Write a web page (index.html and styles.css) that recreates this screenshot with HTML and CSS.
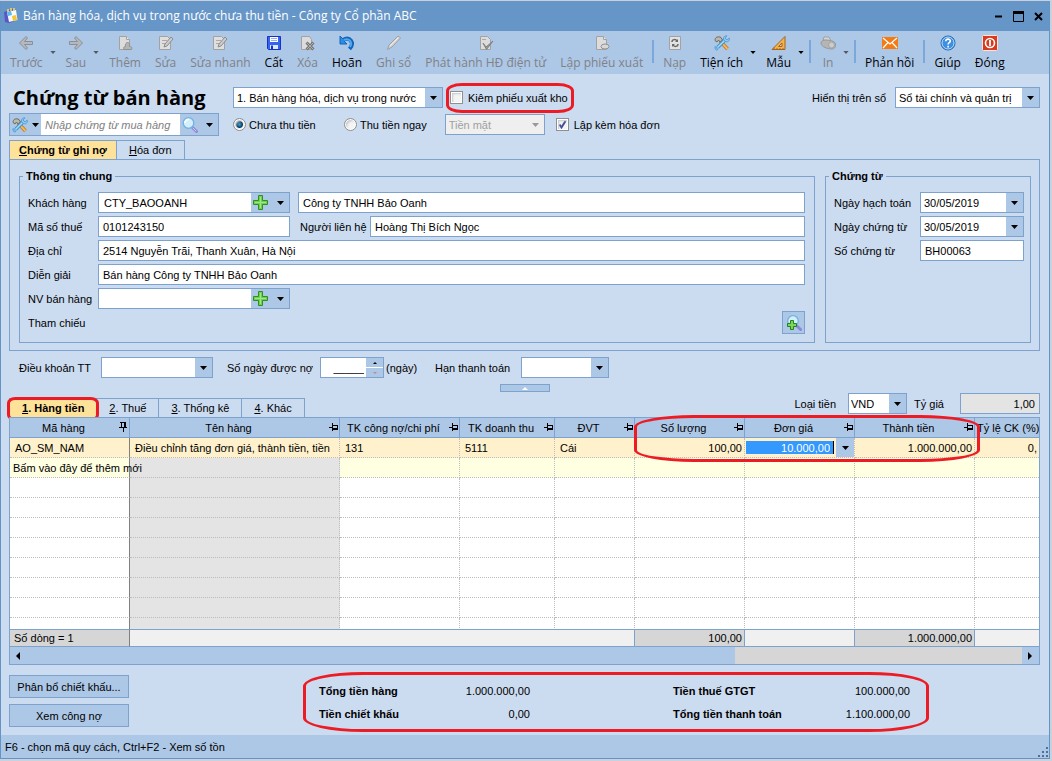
FILE: index.html
```html
<!DOCTYPE html>
<html lang="vi">
<head>
    <meta charset="utf-8">
    <title>Bán hàng hóa, dịch vụ trong nước chưa thu tiền - Công ty Cổ phần ABC</title>
    <link rel="stylesheet" href="styles.css">
</head>
<body>
    <svg class="defs" aria-hidden="true">
        <symbol id="i-back" viewBox="0 0 16 16"><path d="M1.500 8L8 1.500l1.500 1.500L6.500 6.500H14.500v3H6.500L9.500 13 8 14.500z" fill="#b5b8bc" stroke="#8b8f94"/></symbol>
        <symbol id="i-next" viewBox="0 0 16 16"><path d="M14.500 8L8 1.500 6.500 3l3 3.500H1.500v3H9.500L6.500 13 8 14.500z" fill="#b5b8bc" stroke="#8b8f94"/></symbol>
        <symbol id="i-new" viewBox="0 0 16 16"><path d="M2.500 1.500h7l3 3v10h-10z" fill="#dcdcdc" stroke="#a2a2a2"/><path d="M9.500 1.500v3h3" fill="#eee" stroke="#a2a2a2"/><path d="M7 14.500c-1-2 0-3 1.500-3-.5-3 1-4 2-4s2.500 1 2 4c2 0 3 1 2 3z" fill="#b4b4b4" stroke="#929292"/></symbol>
        <symbol id="i-export" viewBox="0 0 16 16"><path d="M2.500 1.500h7l3 3v10h-10z" fill="#dcdcdc" stroke="#a2a2a2"/><path d="M9.500 1.500v3h3" fill="#eee" stroke="#a2a2a2"/><ellipse cx="11" cy="11.500" rx="4" ry="2.500" fill="#d8d8d8" stroke="#929292"/></symbol>
        <symbol id="i-edit" viewBox="0 0 16 16"><path d="M1.500 1.500h8l3 3v10h-11z" fill="#dfdfdf" stroke="#a2a2a2"/><path d="M4 5.500h5M4 8.500h3" stroke="#aaa"/><path d="M6 12l1-3 6-7 2 2-6 7z" fill="#ccc" stroke="#8c8c8c"/></symbol>
        <symbol id="i-save" viewBox="0 0 16 16"><path d="M1.500 1.500h13v13h-12l-1-1z" fill="#3464ee" stroke="#1a31c4"/><path d="M4 2h8v5H4z" fill="#fff"/><path d="M5 3.500h6M5 5.500h6" stroke="#93aef5"/><path d="M4 10h8v4H4z" fill="#dbe6ff"/><path d="M5 10.500h2V14H5z" fill="#1a31c4"/></symbol>
        <symbol id="i-delete" viewBox="0 0 16 16"><path d="M1.500 1.500h8l2 3v10h-10z" fill="#dcdcdc" stroke="#a2a2a2"/><path d="M6.500 7.500l7 7M13.500 7.500l-7 7" stroke="#777" stroke-width="3"/><path d="M6.500 7.500l7 7M13.500 7.500l-7 7" stroke="#b0b0b0"/></symbol>
        <symbol id="i-undo" viewBox="0 0 16 16"><path d="M4 5c7-4 12 3 6.500 9" fill="none" stroke="#1464b8" stroke-width="4"/><path d="M1 1v8h7L5 6l2-3-3 1z" fill="#2f8de4" stroke="#1464b8"/><path d="M5 5c5-2.500 9 2 6 7" fill="none" stroke="#4fa9f2" stroke-width="2"/></symbol>
        <symbol id="i-pencil" viewBox="0 0 16 16"><path d="M1.500 14.500l1.500-4.500L11.500 1.500q2-.5 3 1.500L6 12z" fill="#d2d2d2" stroke="#a0a0a0"/><path d="M4 11l8.500-8.500" stroke="#eee"/></symbol>
        <symbol id="i-issue" viewBox="0 0 16 16"><path d="M2.500 1.500h7l3 3v10h-10z" fill="#dcdcdc" stroke="#a2a2a2"/><path d="M5 8l3 4 7-6-6.500 8.500z" fill="#999" stroke="#808080"/><path d="M4 4.500h4" stroke="#aaa"/></symbol>
        <symbol id="i-reload" viewBox="0 0 16 16"><path d="M2.500 1.500h11v13h-11z" fill="#e2e2e2" stroke="#a2a2a2"/><path d="M5 7c0-3 4-3 5-1M11 9c0 3-4 3-5 1" fill="none" stroke="#6a6a6a" stroke-width="1.500"/><path d="M11 4v3H8zM5 12V9h3z" fill="#6a6a6a"/></symbol>
        <symbol id="i-tools" viewBox="0 0 16 16"><path d="M6 6l7.500 8" stroke="#b87425" stroke-width="3.500"/><path d="M6 6l7.500 8" stroke="#f3b65a" stroke-width="2"/><path d="M1 5.500C1 2 4 1 7 2.500L8.500 5 6 7 4.500 5 3 7z" fill="#b9b9ad" stroke="#706b60"/><path d="M3.500 12.500L12 4" stroke="#3f94d1" stroke-width="3.500"/><path d="M3.500 12.500L12 4" stroke="#a9dbf7" stroke-width="1.500"/><path d="M13 .8L11 3l2 2 2.200-2c.8 3-1.500 4.500-3.700 3.500L9.500 4.500C9 2 11 .5 13 .8zM1 11.500l2 1.500.5 2C1.500 15.500.5 13.500 1 11.500z" fill="#8bcaf2" stroke="#3f94d1" stroke-width=".7"/></symbol>
        <symbol id="i-ruler" viewBox="0 0 16 16"><path d="M14 1.500v13H1z" fill="#f4b14c" stroke="#a5651e"/><path d="M11 8v3.500H7.500z" fill="#bed2e8" stroke="#a5651e"/><path d="M3 14.500v-2M6 14.500v-1.500M9 14.500v-1.500M12 14.500v-1.500" stroke="#a5651e"/></symbol>
        <symbol id="i-print" viewBox="0 0 16 16"><path d="M3 5l1-3h5l2 4z" fill="#d6d6d6" stroke="#a0a0a0"/><path d="M1 8c0-2 2-3 5-3s9 1 9.500 4c.5 4-2 5-3.500 5-4 0-11-2-11-6z" fill="#b5b5b5" stroke="#999"/><circle cx="11.500" cy="10" r="3" fill="#ccc" stroke="#a4a4a4"/></symbol>
        <symbol id="i-mail" viewBox="0 0 16 16"><path d="M0 2h16v12H0z" fill="#f47b14"/><path d="M1 3l7 6 7-6M1 13l5-5.500M15 13l-5-5.500" fill="none" stroke="#fff" stroke-width="1.200"/></symbol>
        <symbol id="i-help" viewBox="0 0 16 16"><circle cx="8" cy="8" r="7" fill="#3d8fdf" stroke="#1e62ab"/><circle cx="8" cy="8" r="6" fill="none" stroke="#b9dcfa"/><path d="M5.800 6.200C5.800 3.500 10.300 3.500 10.300 6c0 1.600-2.200 1.600-2.200 3.400M8.100 10.800v1.600" fill="none" stroke="#fff" stroke-width="1.600"/></symbol>
        <symbol id="i-close" viewBox="0 0 16 16"><rect x=".5" y=".5" width="15" height="15" rx="1" fill="#d93a1c" stroke="#fbe4de"/><circle cx="8" cy="8" r="4.500" fill="none" stroke="#fff" stroke-width="1.600"/><path d="M8 5v6" stroke="#fff" stroke-width="1.800"/></symbol>
        <symbol id="i-search" viewBox="0 0 16 16"><path d="M10.500 10.500l4 4" stroke="#8c87d8" stroke-width="3" stroke-linecap="round"/><path d="M11 11l3 3" stroke="#d3d0f6" stroke-linecap="round"/><circle cx="6.500" cy="6" r="5.300" fill="#d4eefb" stroke="#6fb2e4" stroke-width="1.300"/><path d="M3 6c0-2 1.500-3.500 4-3.500" fill="none" stroke="#fff" stroke-width="1.500"/></symbol>
        <symbol id="i-plus" viewBox="0 0 16 16"><path d="M5.500 .5h4v5h5v4h-5v5h-4v-5h-5v-4h5z" fill="#6fd14f" stroke="#2f8f22"/><path d="M7.500 2v11M2 7.500h11" stroke="#a0e886"/></symbol>
        <symbol id="i-searchadd" viewBox="0 0 16 16"><path d="M11 11l3.500 3.500" stroke="#8c87d8" stroke-width="3" stroke-linecap="round"/><circle cx="7" cy="6" r="5.300" fill="#d4eefb" stroke="#6fb2e4" stroke-width="1.300"/><path d="M4.500 5.500h3v3h3v3h-3v3h-3v-3h-3v-3h3z" fill="#7bd65c" stroke="#26801c"/></symbol>
        <symbol id="i-pin" viewBox="0 0 10 8"><path d="M0 4.500h3M3.500 0v8M3.500 2.500h5M8.500 2v5M3.500 5.500h5M3.500 6.500h5" fill="none" stroke="#000"/></symbol>
        <symbol id="i-pinned" viewBox="0 0 8 10"><path d="M1 .5h6M2.500 .5v5M5.500 .5v5M6.500 .5v5M0 5.500h8M4.500 6v4" fill="none" stroke="#000"/></symbol>
        <symbol id="i-caret" viewBox="0 0 7 4"><path d="M0 0h7L3.500 4z" fill="currentColor"/></symbol>
    </svg>

    <div class="window">
        <header class="titlebar">
            <svg class="app-icon" viewBox="0 0 16 16"><path d="M1 4l9-3 4 11-8 3-4-1z" fill="#5a55c9"/><path d="M4 4l9-2 1.500 10L6 14z" fill="#f4faff"/><path d="M4 4l4-1 1 4-4 1z" fill="#5bb9ec"/><path d="M9 8l4-1 1 5-4 1z" fill="#f5c534"/><path d="M5 1v3M8 0v3M11 0v3" stroke="#f7dc5a" stroke-width="1.500"/></svg>
            <span class="title">Bán hàng hóa, dịch vụ trong nước chưa thu tiền - Công ty Cổ phần ABC</span>
            <button class="win-btn" aria-label="Thu nhỏ"><svg viewBox="0 0 11 11"><path d="M2 5.500h7" stroke="#000" stroke-width="2"/></svg></button>
            <button class="win-btn" aria-label="Phóng to"><svg viewBox="0 0 11 11"><path d="M.5 1v9.500h10V1" fill="none" stroke="#000"/><path d="M0 1.500h11" stroke="#000" stroke-width="3"/></svg></button>
            <button class="win-btn" aria-label="Đóng cửa sổ"><svg viewBox="0 0 11 11"><path d="M2 2l7 7M9 2L2 9" stroke="#000" stroke-width="2"/></svg></button>
        </header>

        <nav class="toolbar">
            <button class="tool" disabled><svg><use href="#i-back"/></svg>Trước</button>
            <svg class="drop off"><use href="#i-caret"/></svg>
            <button class="tool" disabled><svg><use href="#i-next"/></svg>Sau</button>
            <svg class="drop off"><use href="#i-caret"/></svg>
            <button class="tool" disabled><svg><use href="#i-new"/></svg>Thêm</button>
            <button class="tool" disabled><svg><use href="#i-edit"/></svg>Sửa</button>
            <button class="tool" disabled><svg><use href="#i-edit"/></svg>Sửa nhanh</button>
            <button class="tool"><svg><use href="#i-save"/></svg>Cất</button>
            <button class="tool" disabled><svg><use href="#i-delete"/></svg>Xóa</button>
            <button class="tool"><svg><use href="#i-undo"/></svg>Hoãn</button>
            <button class="tool" disabled><svg><use href="#i-pencil"/></svg>Ghi sổ</button>
            <button class="tool" disabled><svg><use href="#i-issue"/></svg>Phát hành HĐ điện tử</button>
            <button class="tool" disabled><svg><use href="#i-export"/></svg>Lập phiếu xuất</button>
            <span class="sep"></span>
            <button class="tool" disabled><svg><use href="#i-reload"/></svg>Nạp</button>
            <button class="tool"><svg><use href="#i-tools"/></svg>Tiện ích</button>
            <svg class="drop"><use href="#i-caret"/></svg>
            <button class="tool"><svg><use href="#i-ruler"/></svg>Mẫu</button>
            <svg class="drop"><use href="#i-caret"/></svg>
            <span class="sep"></span>
            <button class="tool" disabled><svg><use href="#i-print"/></svg>In</button>
            <svg class="drop off"><use href="#i-caret"/></svg>
            <span class="sep"></span>
            <button class="tool"><svg><use href="#i-mail"/></svg>Phản hồi</button>
            <span class="sep"></span>
            <button class="tool"><svg><use href="#i-help"/></svg>Giúp</button>
            <button class="tool"><svg><use href="#i-close"/></svg>Đóng</button>
        </nav>

        <main class="content">
            <section class="head">
                <h1>Chứng từ bán hàng</h1>
                <select class="combo kind" aria-label="Loại chứng từ"><option>1. Bán hàng hóa, dịch vụ trong nước</option></select>
                <label class="check marked"><input type="checkbox"> Kiêm phiếu xuất kho<span class="mark mark-check"></span></label>
                <label class="push" for="book">Hiển thị trên sổ</label>
                <select class="combo book" id="book"><option>Sổ tài chính và quản trị</option></select>
            </section>

            <section class="head second">
                <div class="search">
                    <button class="inner-btn" aria-label="Tùy chọn"><svg class="ico"><use href="#i-tools"/></svg><svg class="caret"><use href="#i-caret"/></svg></button>
                    <input type="text" placeholder="Nhập chứng từ mua hàng" aria-label="Nhập chứng từ mua hàng">
                    <button class="inner-btn" aria-label="Tìm"><svg class="ico"><use href="#i-search"/></svg><svg class="caret"><use href="#i-caret"/></svg></button>
                </div>
                <label class="radio first"><input type="radio" name="pay" checked> Chưa thu tiền</label>
                <label class="radio"><input type="radio" name="pay"> Thu tiền ngay</label>
                <select class="combo cash" aria-label="Hình thức" disabled><option>Tiền mặt</option></select>
                <label class="check"><input type="checkbox" checked> Lập kèm hóa đơn</label>
            </section>

            <div class="tabs" role="tablist">
                <button class="tab wide active" role="tab"><u>C</u>hứng từ ghi nợ</button>
                <button class="tab" role="tab"><u>H</u>óa đơn</button>
            </div>
            <section class="panel">
                <fieldset class="general">
                    <legend>Thông tin chung</legend>
                    <div class="row">
                        <label for="cust">Khách hàng</label>
                        <div class="lookup">
                            <input type="text" id="cust" value="CTY_BAOOANH">
                            <button class="inner-btn" aria-label="Thêm khách hàng"><svg class="ico"><use href="#i-plus"/></svg><svg class="caret"><use href="#i-caret"/></svg></button>
                        </div>
                        <input class="field grow" type="text" value="Công ty TNHH Bảo Oanh" aria-label="Tên khách hàng">
                    </div>
                    <div class="row">
                        <label for="tax">Mã số thuế</label>
                        <input class="field mid" type="text" id="tax" value="0101243150">
                        <label class="contact" for="contact">Người liên hệ</label>
                        <input class="field grow" type="text" id="contact" value="Hoàng Thị Bích Ngọc">
                    </div>
                    <div class="row">
                        <label for="addr">Địa chỉ</label>
                        <input class="field grow" type="text" id="addr" value="2514 Nguyễn Trãi, Thanh Xuân, Hà Nội">
                    </div>
                    <div class="row">
                        <label for="desc">Diễn giải</label>
                        <input class="field grow" type="text" id="desc" value="Bán hàng Công ty TNHH Bảo Oanh">
                    </div>
                    <div class="row">
                        <label for="staff">NV bán hàng</label>
                        <div class="lookup">
                            <input type="text" id="staff">
                            <button class="inner-btn" aria-label="Thêm nhân viên"><svg class="ico"><use href="#i-plus"/></svg><svg class="caret"><use href="#i-caret"/></svg></button>
                        </div>
                    </div>
                    <div class="row">
                        <span class="row-label">Tham chiếu</span>
                        <button class="ref-btn" aria-label="Chọn tham chiếu"><svg class="ico"><use href="#i-searchadd"/></svg></button>
                    </div>
                </fieldset>
                <fieldset class="voucher">
                    <legend>Chứng từ</legend>
                    <div class="row">
                        <label for="d1">Ngày hạch toán</label>
                        <select class="combo grow" id="d1"><option>30/05/2019</option></select>
                    </div>
                    <div class="row">
                        <label for="d2">Ngày chứng từ</label>
                        <select class="combo grow" id="d2"><option>30/05/2019</option></select>
                    </div>
                    <div class="row">
                        <label for="no">Số chứng từ</label>
                        <input class="field grow" type="text" id="no" value="BH00063">
                    </div>
                </fieldset>
            </section>

            <section class="terms">
                <label class="t1" for="term">Điều khoản TT</label>
                <select class="combo term" id="term"><option></option></select>
                <label class="t2" for="days">Số ngày được nợ</label>
                <div class="spin">
                    <input type="text" id="days" value="_____">
                    <span class="spin-btns"><button aria-label="Tăng"></button><button class="down" aria-label="Giảm"></button></span>
                </div>
                <span class="unit">(ngày)</span>
                <label class="t3" for="due">Hạn thanh toán</label>
                <select class="combo due" id="due"><option></option></select>
            </section>
            <button class="collapse" aria-label="Thu gọn"></button>

            <div class="grid-head">
                <div class="tabs" role="tablist">
                    <button class="tab active marked" role="tab"><u>1</u>. Hàng tiền<span class="mark mark-tab"></span></button>
                    <button class="tab" role="tab"><u>2</u>. Thuế</button>
                    <button class="tab" role="tab"><u>3</u>. Thống kê</button>
                    <button class="tab" role="tab"><u>4</u>. Khác</button>
                </div>
                <div class="currency">
                    <label for="cur">Loại tiền</label>
                    <select class="combo cur" id="cur"><option>VND</option></select>
                    <label for="rate">Tỷ giá</label>
                    <input class="field rate" type="text" id="rate" value="1,00" readonly>
                </div>
            </div>

            <section class="grid">
                <div class="grid-body">
                    <table>
                        <colgroup><col class="c120"><col class="c210"><col class="c120"><col class="c95"><col class="c80"><col class="c110"><col class="c110"><col class="c120"><col></colgroup>
                        <thead>
                            <tr>
                                <th><div>Mã hàng<svg class="pinned"><use href="#i-pinned"/></svg></div></th>
                                <th><div>Tên hàng<svg class="pin"><use href="#i-pin"/></svg></div></th>
                                <th><div>TK công nợ/chi phí<svg class="pin"><use href="#i-pin"/></svg></div></th>
                                <th><div>TK doanh thu<svg class="pin"><use href="#i-pin"/></svg></div></th>
                                <th><div>ĐVT<svg class="pin"><use href="#i-pin"/></svg></div></th>
                                <th><div>Số lượng<svg class="pin"><use href="#i-pin"/></svg></div></th>
                                <th><div>Đơn giá<svg class="pin"><use href="#i-pin"/></svg></div></th>
                                <th><div>Thành tiền<svg class="pin"><use href="#i-pin"/></svg></div></th>
                                <th class="cut">Tỷ lệ CK (%)</th>
                            </tr>
                        </thead>
                        <tbody>
                            <tr class="current">
                                <td>AO_SM_NAM</td>
                                <td>Điều chỉnh tăng đơn giá, thành tiền, tiền</td>
                                <td>131</td>
                                <td>5111</td>
                                <td>Cái</td>
                                <td class="num">100,00</td>
                                <td class="edit"><div><input type="text" value="10.000,00" aria-label="Đơn giá"><button aria-label="Chọn đơn giá"><svg class="caret"><use href="#i-caret"/></svg></button></div></td>
                                <td class="num">1.000.000,00</td>
                                <td class="num">0,</td>
                            </tr>
                            <tr class="add">
                                <td>Bấm vào đây để thêm mới</td><td></td><td></td><td></td><td></td><td></td><td></td><td></td><td></td>
                            </tr>
                            <tr><td></td><td></td><td></td><td></td><td></td><td></td><td></td><td></td><td></td></tr>
                            <tr><td></td><td></td><td></td><td></td><td></td><td></td><td></td><td></td><td></td></tr>
                            <tr><td></td><td></td><td></td><td></td><td></td><td></td><td></td><td></td><td></td></tr>
                            <tr><td></td><td></td><td></td><td></td><td></td><td></td><td></td><td></td><td></td></tr>
                            <tr><td></td><td></td><td></td><td></td><td></td><td></td><td></td><td></td><td></td></tr>
                            <tr><td></td><td></td><td></td><td></td><td></td><td></td><td></td><td></td><td></td></tr>
                            <tr><td></td><td></td><td></td><td></td><td></td><td></td><td></td><td></td><td></td></tr>
                            <tr><td></td><td></td><td></td><td></td><td></td><td></td><td></td><td></td><td></td></tr>
                        </tbody>
                    </table>
                </div>
                <table class="totals">
                    <colgroup><col class="c120"><col class="c505"><col class="c110"><col class="c110"><col class="c120"><col></colgroup>
                    <tbody>
                        <tr><td class="sum count">Số dòng = 1</td><td></td><td class="sum num">100,00</td><td></td><td class="sum num">1.000.000,00</td><td></td></tr>
                    </tbody>
                </table>
                <div class="scrollbar">
                    <button class="left" aria-label="Cuộn trái"></button>
                    <span class="thumb"></span>
                    <button class="right" aria-label="Cuộn phải"></button>
                </div>
                <span class="mark mark-cols"></span>
            </section>

            <footer class="bottom">
                <div class="actions">
                    <button>Phân bổ chiết khấu...</button>
                    <button>Xem công nợ</button>
                </div>
                <dl class="summary">
                    <dt>Tổng tiền hàng</dt><dd>1.000.000,00</dd>
                    <dt>Tiền thuế GTGT</dt><dd>100.000,00</dd>
                    <dt>Tiền chiết khấu</dt><dd>0,00</dd>
                    <dt>Tổng tiền thanh toán</dt><dd>1.100.000,00</dd>
                </dl>
            </footer>
        </main>

        <div class="status">
            <span>F6 - chọn mã quy cách, Ctrl+F2 - Xem số tồn</span>
            <svg class="grip" viewBox="0 0 11 11"><path d="M8 0h2v2H8zM4 4h2v2H4zM8 4h2v2H8zM0 8h2v2H0zM4 8h2v2H4zM8 8h2v2H8z" fill="#4f6f9c"/></svg>
        </div>
    </div>
</body>
</html>
```
FILE: styles.css
```css
* { box-sizing: border-box; }
body {
    margin: 0;
    padding: 1px 2px 2px 0;
    height: 100vh;
    min-height: 700px;
    background: #c9d2dc;
    color: #000;
    font: 11px/14px "Liberation Sans", Arial, sans-serif;
}
button, input, select { font: inherit; color: inherit; margin: 0; }
button { padding: 0; border: 0; background: none; }
.defs { position: absolute; width: 0; height: 0; }

.window {
    display: flex;
    flex-direction: column;
    height: 100%;
    background: #cbdbf0;
    border: 1px solid #6593c6;
    border-top: 0;
}

/* title bar */
.titlebar { display: flex; align-items: center; height: 30px; padding: 0 5px 0 2px; background: #6696c8; }
.app-icon { width: 16px; height: 16px; margin-right: 4px; }
.title { flex: 1; color: #fff; font: 12px/16px "Open Sans", sans-serif; }
.win-btn { width: 11px; height: 11px; margin-left: 9px; }
.win-btn svg { display: block; width: 11px; height: 11px; }

/* toolbar */
.toolbar { display: flex; height: 43px; padding: 4px 0 0 2px; background: #adc7e7; font: 12px/16px "Open Sans", sans-serif; }
.tool { display: flex; flex-direction: column; align-items: center; gap: 4px; padding: 0 7px; white-space: nowrap; }
.tool svg { width: 16px; height: 16px; }
.tool:disabled { color: #808285; }
.drop { width: 6px; height: 3px; margin: 16px 3px 0 0; }
.drop.off { color: #55585c; }
.sep { width: 2px; height: 23px; margin: 5px 2px 0; background: #7ba7db; }

/* form controls */
.combo, .field, .lookup, .spin {
    height: 21px;
    border: 1px solid #7da2ce;
    border-radius: 0;
    background-color: #fff;
    outline: 0;
}
.field { padding: 0 4px; min-width: 0; }
.combo {
    appearance: none;
    padding: 0 20px 0 3px;
    background-image: url("data:image/svg+xml,%3Csvg xmlns='http://www.w3.org/2000/svg' width='17' height='19'%3E%3Cpath d='M0 0h17v19H0z' fill='%23adc7e7'/%3E%3Cpath d='M5 8h7l-3.500 4z'/%3E%3C/svg%3E");
    background-position: right center;
    background-repeat: no-repeat;
}
.combo:disabled {
    opacity: 1;
    color: #a0a0a0;
    background-color: #efefef;
    background-image: url("data:image/svg+xml,%3Csvg xmlns='http://www.w3.org/2000/svg' width='17' height='19'%3E%3Cpath d='M5 8h7l-3.500 4z' fill='%23999'/%3E%3C/svg%3E");
}
.grow { flex: 1; }
.ico { width: 16px; height: 16px; }
.caret { width: 7px; height: 4px; }
.inner-btn { display: flex; align-items: center; justify-content: center; gap: 8px; width: 38px; padding-right: 3px; background: #adc7e7; }
.lookup { display: flex; width: 192px; }
.lookup input, .search input, .spin input { flex: 1; min-width: 0; padding: 0 5px; border: 0; background: #fff; outline: 0; }

.check, .radio { display: flex; align-items: center; gap: 5px; }
.check input, .radio input {
    appearance: none;
    width: 13px;
    height: 13px;
    border: 1px solid #8e8f8f;
    background: #f4f4f4;
    box-shadow: inset 0 0 0 1px #fff, inset 2px 2px 2px #c4c8cf;
}
.check input:checked { background: #f4f4f4 url("data:image/svg+xml,%3Csvg xmlns='http://www.w3.org/2000/svg' viewBox='0 0 11 11'%3E%3Cpath d='M2.500 5.500L4.500 8.500 8.500 2' fill='none' stroke='%23405098' stroke-width='2'/%3E%3C/svg%3E"); }
.radio input { border-radius: 50%; }
.radio input:checked { background: radial-gradient(circle, #39a4d8 0, #0b3a5e 3px, #eee 4px); }

/* red pen marks */
.marked { position: relative; }
.mark { position: absolute; border: 3px solid #ed1c24; pointer-events: none; }
.mark-check { inset: -8px -6px -8px -4px; border-radius: 16px / 8px; }
.mark-tab { inset: -2px -3px -4px -3px; border-radius: 8px / 6px; }
.mark-cols { top: -3px; left: 624px; width: 346px; height: 47px; border-radius: 60px / 12px; }

/* heading rows */
.content { display: flex; flex-direction: column; flex: 1; min-height: 0; padding: 0 9px 0 8px; }
.head { display: flex; align-items: center; height: 39px; padding-top: 8px; }
.head h1 { width: 224px; margin: 0; padding-left: 4px; font: bold 20px/28px "Open Sans", sans-serif; white-space: nowrap; }
.kind { width: 210px; margin-right: 7px; }
.push { margin-left: auto; }
.book { width: 145px; margin-left: 9px; }
.head.second { height: 23px; padding: 0; }
.search { display: flex; width: 210px; height: 23px; border: 1px solid #7da2ce; }
.search .inner-btn:first-child { width: 31px; gap: 4px; padding: 0; }
.search input { padding: 0 4px; font-style: italic; }
.search input::placeholder { color: #808080; }
.radio.first { width: 97px; }
.radio { margin-left: 14px; gap: 3px; }
.cash { width: 100px; margin: 0 11px 0 18px; }

/* tabs */
.tabs { display: flex; }
.tab { height: 19px; padding: 0 12px; border: 1px solid #7da2ce; border-width: 1px 1px 0 0; white-space: nowrap; }
.tab.active { border-left-width: 1px; background: #ffe29a; font-weight: bold; }
.tab.wide { padding: 0 9px; }
.content > .tabs { margin-top: 4px; }

/* document panel */
.panel { display: flex; gap: 10px; height: 192px; padding: 8px 8px 7px 9px; border: 1px solid #7da2ce; }
.panel fieldset { min-width: 0; margin: 0; padding: 7px 9px 0 8px; border: 1px solid #7da2ce; }
.panel legend { height: 17px; margin-left: -5px; padding: 0 3px; font-weight: bold; line-height: 17px; }
.general { flex: 1; }
.voucher { width: 206px; }
.row { display: flex; align-items: center; height: 21px; margin-bottom: 3px; }
.row label, .row-label { width: 70px; padding-top: 1px; white-space: nowrap; }
.voucher .row label { width: 86px; }
.voucher.voucher { padding-right: 6px; }
.lookup + .grow { margin-left: 8px; }
.mid { width: 192px; margin-right: 10px; }
.ref-btn { display: flex; align-items: center; justify-content: center; width: 23px; height: 23px; margin-left: auto; border: 1px solid #7da2ce; background: #adc7e7; }

/* payment terms */
.terms { display: flex; align-items: center; padding: 6px 0 0 10px; }
.t1 { width: 82px; }
.term { width: 112px; margin-right: 14px; }
.t2 { width: 93px; }
.spin { display: flex; width: 64px; margin-right: 2px; }
.spin input { padding: 0 2px; text-align: right; }
.spin-btns { display: flex; flex-direction: column; gap: 1px; width: 17px; background: #fff; }
.spin-btns button { display: flex; flex: 1; align-items: center; justify-content: center; background: #adc7e7; }
.spin-btns button::before { content: ""; border: 2px solid transparent; border-top: 0; border-bottom-color: #000; }
.spin-btns .down::before { border-top: 2px solid #c08794; border-bottom: 0; }
.unit { width: 49px; }
.t3 { width: 86px; }
.due { width: 88px; }
.collapse { display: flex; justify-content: center; align-items: center; align-self: center; width: 50px; height: 8px; margin: 6px 0 1px; border: 1px solid #7da2ce; background: #adc7e7; }
.collapse::before { content: ""; border: 3px solid transparent; border-top: 0; border-bottom-color: #fff; }

/* detail grid */
.grid-head { display: flex; justify-content: space-between; align-items: flex-end; height: 24px; }
.currency { display: flex; align-items: center; align-self: flex-start; }
.cur { width: 59px; margin: 0 7px 0 12px; padding-left: 2px; }
.rate { width: 80px; margin-left: 16px; background: #e4e4e4; text-align: right; }
.grid { position: relative; display: flex; flex-direction: column; flex: 1; min-height: 0; border: 1px solid #7da2ce; }
.grid-body { flex: 1; min-height: 0; overflow: hidden; background: #fff; }
.grid table { width: 100%; table-layout: fixed; border-spacing: 0; }
.c80 { width: 80px; }
.c95 { width: 95px; }
.c110 { width: 110px; }
.c120 { width: 120px; }
.c210 { width: 210px; }
.c505 { width: 505px; }
.grid th { height: 20px; padding: 0; border-right: 1px solid #7da2ce; border-bottom: 1px solid #7da2ce; background: #adc7e7; font-weight: normal; white-space: nowrap; }
.grid th div { position: relative; padding-right: 12px; }
.grid .cut { overflow: hidden; text-align: left; padding-left: 2px; border-right: 0; }
.pin { position: absolute; right: 0; top: 2px; width: 10px; height: 8px; }
.pinned { position: absolute; right: 2px; top: 1px; width: 8px; height: 10px; }
.grid td { height: 20px; padding: 0 5px; border-right: 1px dotted #bdbdbd; border-bottom: 1px dotted #bdbdbd; white-space: nowrap; }
.grid td:first-child { border-right: 1px solid #808080; }
.grid td:last-child { border-right: 0; }
.grid-body td:nth-child(2) { background: #e4e4e4; }
.grid .num { padding-right: 2px; text-align: right; }
.grid .current td { background: #fff1cb; }
.add td { background: #ffffe1; }
.grid .add td:first-child { padding-left: 3px; }
.grid .edit { padding: 0; }
.edit div { display: flex; height: 19px; }
.edit input { flex: 1; min-width: 0; height: 13px; margin: 3px 2px 0 1px; padding: 0 3px; border: 0; border-right: 1px solid #000; background: #39f; color: #fff; text-align: right; outline: 0; }
.edit button { display: flex; align-items: center; justify-content: center; width: 18px; background: #adc7e7; }

.grid .totals td { height: 18px; background: #f0f0f0; border: 0 solid #7da2ce; border-width: 1px 1px 1px 0; }
.grid .totals .count { padding-left: 4px; border-right-color: #808080; }
.grid .totals td:last-child { border-right: 0; }
.grid .totals .sum { background: #d6d6d6; }
.scrollbar { display: flex; height: 17px; background: #d6d6d6; }
.scrollbar button { width: 17px; background: #adc7e7; }
.scrollbar button::before { content: ""; display: block; width: 0; margin-left: 6px; border: 4px solid transparent; }
.scrollbar .left::before { border-left: 0; border-right-color: #000; }
.scrollbar .right::before { border-right: 0; border-left-color: #000; }
.thumb { flex: 1; margin-right: 287px; background: #adc7e7; }

/* totals and buttons */
.bottom { display: flex; align-items: flex-start; padding: 7px 0 3px; }
.actions { display: flex; flex-direction: column; gap: 6px; width: 120px; margin: 3px 174px 0 0; }
.actions button { height: 23px; border: 1px solid #7da2ce; background: #adc7e7; }
.summary {
    display: grid;
    grid-template-columns: 110px 101px 1fr 101px;
    align-content: start;
    row-gap: 9px;
    flex: 0 1 626px;
    height: 60px;
    margin: 0;
    padding: 9px 16px 0 13px;
    border: 3px solid #ed1c24;
    border-radius: 60px / 14px;
}
.summary dt { font-weight: bold; }
.summary dt:nth-of-type(even) { padding-left: 143px; }
.summary dd { margin: 0; text-align: right; }

.status { display: flex; align-items: center; justify-content: space-between; height: 23px; padding: 0 0 0 4px; background: #adc7e7; }
.grip { width: 11px; height: 11px; align-self: flex-end; }
```
